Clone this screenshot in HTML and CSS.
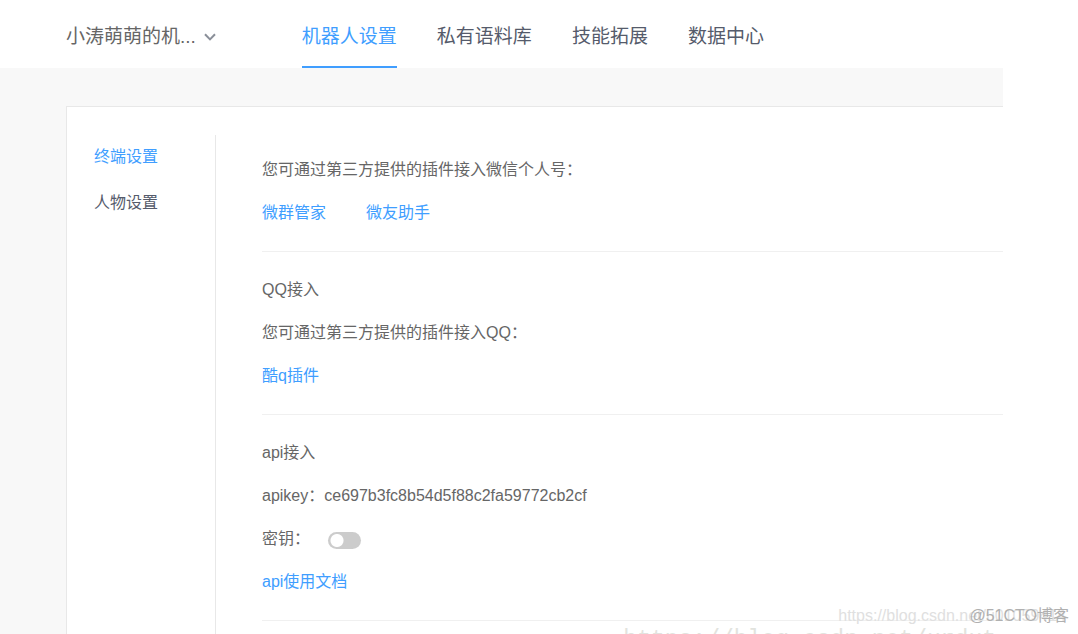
FILE: index.html
```html
<!DOCTYPE html>
<html lang="zh-CN">
<head>
<meta charset="utf-8">
<meta name="viewport" content="width=device-width, initial-scale=1">
<title>机器人设置</title>
<link rel="stylesheet" href="styles.css">
</head>
<body>
<div class="app">
  <header class="topbar">
    <button class="robot-picker" type="button">
      <span>小涛萌萌的机...</span>
      <svg class="chevron" viewBox="0 0 12 8" aria-hidden="true"><path d="M1 1.2 L6 6.4 L11 1.2"/></svg>
    </button>
    <nav class="tabs">
      <a class="tab tab-active" href="#robot">机器人设置</a>
      <a class="tab" href="#corpus">私有语料库</a>
      <a class="tab" href="#skills">技能拓展</a>
      <a class="tab" href="#data">数据中心</a>
    </nav>
  </header>
  <main class="page">
    <div class="card">
      <nav class="side">
        <a class="side-link side-active" href="#terminal">终端设置</a>
        <a class="side-link" href="#persona">人物设置</a>
      </nav>
      <div class="content">
        <section class="group">
          <p class="row">您可通过第三方提供的插件接入微信个人号：</p>
          <p class="row row-links"><a class="link" href="#wq">微群管家</a><a class="link" href="#wy">微友助手</a></p>
        </section>
        <section class="group">
          <p class="row">QQ接入</p>
          <p class="row">您可通过第三方提供的插件接入QQ：</p>
          <p class="row"><a class="link" href="#kuq">酷q插件</a></p>
        </section>
        <section class="group">
          <p class="row">api接入</p>
          <p class="row">apikey：ce697b3fc8b54d5f88c2fa59772cb2cf</p>
          <div class="row row-switch"><label for="secret">密钥：</label><input class="switch" id="secret" type="checkbox" role="switch"></div>
          <p class="row"><a class="link" href="#doc">api使用文档</a></p>
        </section>
      </div>
    </div>
  </main>
  <div class="mark mark-mono">https://blog.csdn.net/urdut</div>
  <div class="mark mark-url">https://blog.csdn.net/u01059414</div>
  <div class="mark mark-site">@51CTO博客</div>
</div>
</body>
</html>
```
FILE: styles.css
```css
* {
  box-sizing: border-box;
}

body {
  margin: 0;
  background: #fff;
  color: #666;
  font: 16px/24px "Liberation Sans", "Noto Sans CJK SC", sans-serif;
}

a {
  color: inherit;
  text-decoration: none;
}

.app {
  position: relative;
  display: flex;
  flex-direction: column;
  height: 100vh;
  overflow: hidden;
}

.topbar {
  display: flex;
  flex: none;
  gap: 86px;
  padding-left: 66px;
  font-size: 19px;
}

.robot-picker {
  display: flex;
  align-items: center;
  gap: 8px;
  padding: 5px 0 0;
  border: 0;
  background: none;
  color: #666;
  font: inherit;
}

.chevron {
  width: 12px;
  height: 8px;
  fill: none;
  stroke: #8a8f99;
  stroke-width: 2;
}

.tabs {
  display: flex;
  gap: 40px;
}

.tab {
  padding: 25px 0 17px;
  border-bottom: 2px solid transparent;
  color: #555b6b;
}

.tab-active {
  border-color: #409eff;
  color: #409eff;
}

.page {
  flex: 1;
  margin-right: 75px;
  padding: 38px 0 0 66px;
  background: #f8f8f8;
}

.card {
  display: flex;
  height: 100%;
  padding-top: 28px;
  border: solid #e8e8e8;
  border-width: 1px 0 0 1px;
  background: #fff;
}

.side {
  display: flex;
  flex: none;
  flex-direction: column;
  gap: 22px;
  width: 149px;
  padding: 10px 0 0 27px;
  border-right: 1px solid #e8e8e8;
}

.side-link {
  color: #555b6b;
}

.side-active,
.link {
  color: #409eff;
}

.content {
  flex: 1;
  padding: 23px 0 0 46px;
}

.group {
  display: flex;
  flex-direction: column;
  gap: 19px;
  margin-bottom: 26px;
  padding-bottom: 26px;
  border-bottom: 1px solid #f0f0f0;
}

.row {
  margin: 0;
}

.row-links {
  display: flex;
  gap: 40px;
}

.row-switch {
  display: flex;
  align-items: center;
  gap: 18px;
}

.switch {
  width: 33px;
  height: 17px;
  margin: 2px 0 0;
  border-radius: 9px;
  appearance: none;
  background: radial-gradient(circle at 9px center, #fff 6px, #ccc 7px);
}

.switch:checked {
  background: radial-gradient(circle at 24px center, #fff 6px, #409eff 7px);
}

.mark {
  position: absolute;
  white-space: nowrap;
  pointer-events: none;
}

.mark-mono {
  right: 82px;
  bottom: -20px;
  color: #e2e3de;
  font: 23px/28px "Liberation Mono", monospace;
}

.mark-url {
  right: 12px;
  bottom: 6px;
  color: #e0e0e0;
}

.mark-site {
  right: 9px;
  bottom: 6px;
  color: #b0b0b0;
}
```
